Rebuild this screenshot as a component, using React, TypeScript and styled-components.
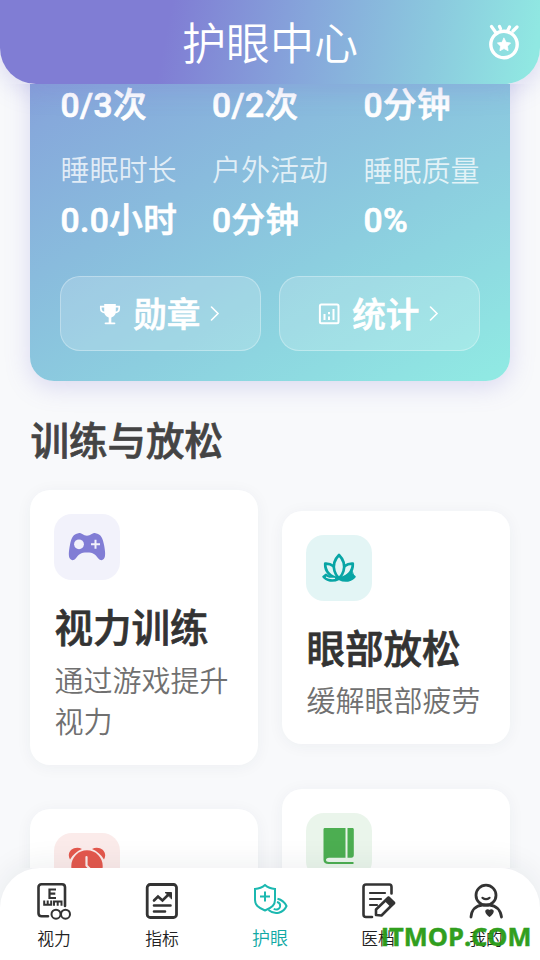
import React from 'react';
import styled, { createGlobalStyle } from 'styled-components';

const GlobalStyle = createGlobalStyle`
  * { box-sizing: border-box; }
  body {
    margin: 0;
    background: #f8f9fb;
    font-family: Roboto, "Noto Sans CJK SC", sans-serif;
  }
`;

const Screen = styled.div`
  position: relative;
  width: 540px;
  height: 960px;
  display: flex;
  flex-direction: column;
  overflow: hidden;
  background: #f8f9fb;
`;

const Header = styled.header`
  position: relative;
  z-index: 2;
  flex: none;
  height: 84px;
  display: grid;
  grid-template-columns: 72px 1fr 72px;
  align-items: center;
  border-radius: 0 0 36px 36px;
  background: linear-gradient(101deg, #807dd4 0%, #807dd4 31%, #86a6db 56%, #8bc9de 79%, #90e8e2 98%);
  box-shadow: 0 6px 24px rgba(128, 125, 212, 0.28);
`;

const Title = styled.h1`
  grid-column: 2;
  margin: 0;
  padding-top: 5px;
  text-align: center;
  font-size: 44px;
  line-height: 64px;
  font-weight: 350;
  color: #fff;
`;

const HeaderAction = styled.button`
  display: flex;
  justify-content: center;
  padding: 0;
  border: 0;
  background: none;
`;

const Content = styled.main`
  flex: 1;
  min-height: 0;
  overflow: hidden;
  padding: 0 30px;
`;

const SummaryCard = styled.section`
  height: 486.5px;
  margin-top: -190px;
  padding: 0 30px 29.5px;
  display: flex;
  flex-direction: column;
  justify-content: flex-end;
  border-radius: 24px;
  background: linear-gradient(150deg, #807dd4 0%, #86a9db 31%, #8ccedf 70%, #90e9e3 98%);
  box-shadow: 0 6px 24px rgba(128, 125, 212, 0.25);
`;

const Stats = styled.div`
  display: grid;
  grid-template-columns: repeat(3, 117px);
  justify-content: space-between;
  row-gap: 19px;
  margin: 0 -0.5px 31px 0.5px;
  white-space: nowrap;
`;

const StatLabel = styled.div<{ $nudge?: boolean }>`
  padding-top: ${p => (p.$nudge ? 1 : 0)}px;
  height: 44px;
  font-size: 29px;
  line-height: 44px;
  font-weight: 350;
  color: rgba(255, 255, 255, 0.77);
`;

const StatValue = styled.div`
  margin-top: 3px;
  height: 49px;
  font-size: 33.6px;
  line-height: 49px;
  font-weight: 500;
  -webkit-text-stroke: 0.7px currentColor;
  color: #fff;
  letter-spacing: 0.4px;
`;

const Actions = styled.div`
  display: grid;
  grid-template-columns: 1fr 1fr;
  gap: 18px;
`;

const ActionButton = styled.button`
  height: 75px;
  padding: 0 2px 0 0;
  display: flex;
  align-items: center;
  justify-content: center;
  border: 1.5px solid rgba(255, 255, 255, 0.3);
  border-radius: 20px;
  background: rgba(255, 255, 255, 0.18);
  font: 500 33.6px/50px Roboto, "Noto Sans CJK SC", sans-serif;
  -webkit-text-stroke: 0.7px currentColor;
  color: #fff;
  & > span { margin: 4px 9.5px 0 12px; }
`;

const SectionTitle = styled.h2`
  margin: 31px 0 18.5px;
  padding-left: 0.5px;
  font-size: 38.5px;
  line-height: 60px;
  font-weight: 500;
  -webkit-text-stroke: 0.7px currentColor;
  color: #444;
`;

const Columns = styled.div`
  display: grid;
  grid-template-columns: repeat(2, minmax(0, 1fr));
  gap: 24px;
  align-items: start;
`;

const Column = styled.div<{ $offset: number }>`
  display: flex;
  flex-direction: column;
  gap: 44.5px;
  padding-top: ${p => p.$offset}px;
`;

const FeatureCard = styled.article`
  padding: 24px 24px 21px;
  border-radius: 20px;
  background: #fff;
  box-shadow: 0 2px 16px rgba(40, 50, 80, 0.05);
`;

const IconTile = styled.div<{ $tint: string }>`
  width: 66px;
  height: 66px;
  display: flex;
  align-items: center;
  justify-content: center;
  border-radius: 18px;
  background: ${p => p.$tint};
`;

const FeatureTitle = styled.h3`
  margin: 20px 0 4.5px;
  padding-left: 0.5px;
  font-size: 38.5px;
  line-height: 57px;
  font-weight: 500;
  -webkit-text-stroke: 0.7px currentColor;
  color: #333;
  white-space: nowrap;
`;

const FeatureText = styled.p`
  margin: 0;
  padding-left: 0.5px;
  width: 182px;
  font-size: 29px;
  line-height: 41px;
  font-weight: 350;
  color: #707070;
`;

const TabBar = styled.nav`
  position: relative;
  z-index: 2;
  flex: none;
  height: 92px;
  display: grid;
  grid-template-columns: repeat(5, 1fr);
  border-radius: 40px 40px 0 0;
  background: #fff;
  box-shadow: 0 -4px 30px rgba(30, 40, 60, 0.07);
`;

const Tab = styled.div<{ $active?: boolean }>`
  display: flex;
  flex-direction: column;
  align-items: center;
  padding-top: 12px;
  font-size: ${p => (p.$active ? 18 : 16.8)}px;
  line-height: 26px;
  font-weight: 350;
  color: ${p => (p.$active ? '#10a9a5' : '#222')};
  & > span { margin-top: 4px; }
`;

const Watermark = styled.div`
  position: absolute;
  z-index: 3;
  right: 8.5px;
  bottom: 6px;
  font: 700 25.4px/36px "Open Sans", sans-serif;
  -webkit-text-stroke: 0.5px currentColor;
  color: #279a13;
  opacity: 0.95;
`;

const MedalIcon = () => (
  <svg width="36" height="40" viewBox="0 0 36 40" fill="none" stroke="#fff" strokeLinecap="round">
    <circle cx="18" cy="22.500" r="13.200" strokeWidth="3.400" />
    <path d="M5.500 4.500l5 7M13.500 4.500l1 2.200M23.500 5l-2 4M31 5l-4 4" strokeWidth="3.200" />
    <path d="M18 16.200l2.100 4.100 4.500.7-3.200 3.200.7 4.500-4.100-2.100-4.100 2.100.7-4.500-3.200-3.200 4.500-.7z" fill="#fff" strokeWidth=".8" />
  </svg>
);

const TrophyIcon = () => (
  <svg width="22" height="22" viewBox="0 0 22 22" fill="none" stroke="#fff">
    <path d="M5.200 1h11.600v7.500c0 3.500-2.500 6-5.800 6s-5.800-2.500-5.800-6z" fill="#fff" stroke="none" />
    <path d="M6 3.700H1.800v1.800C1.800 8 3.500 9.500 6.500 9.700M16 3.700h4.200v1.800c0 2.500-1.700 4-4.700 4.200" strokeWidth="1.700" />
    <path d="M11 13v7" strokeWidth="2.600" />
    <path d="M6.500 20.300h9" strokeWidth="1.800" strokeLinecap="round" />
  </svg>
);

const StatsIcon = () => (
  <svg width="22" height="22" viewBox="0 0 22 22" fill="none" stroke="#fff">
    <rect x="1.900" y="1.500" width="18.600" height="18.800" rx="1.500" strokeWidth="2" />
    <path d="M6.500 11v6M11 13.500V17M15.500 6v11M11 9v2.200" strokeWidth="2" />
  </svg>
);

const ChevronIcon = () => (
  <svg width="10" height="16" viewBox="0 0 10 16" fill="none" stroke="#fff" strokeWidth="1.600" strokeLinecap="round">
    <path d="M1.500 1L8 7.500l-6.500 6.500" />
  </svg>
);

const GamepadIcon = () => (
  <svg width="38" height="30" viewBox="0 0 38 30">
    <path d="M10.500 1.200C13.500.6 15 3.700 19 3.700s5.500-3.100 8.500-2.500c5.500.6 7.500 5.500 8.600 12 1 5.500 1.900 11.300-.4 13.900-1.500 1.800-3.900 1.300-5.600-.9-2.700-3.700-4.800-5.700-11.100-5.700s-8.400 2-11.100 5.700c-1.700 2.200-4.100 2.700-5.600.9C0 24.500.9 18.700 1.900 13.200c1.100-6.500 3.100-11.400 8.600-12z" fill="#817dd5" />
    <circle cx="11" cy="12.300" r="4.900" fill="#f2f2fb" />
    <path d="M27.500 7.800v9M23 12.300h9" stroke="#f2f2fb" strokeWidth="2" />
  </svg>
);

const LotusIcon = () => (
  <svg width="36" height="32" viewBox="0 0 36 32" fill="none" stroke="#08a5a5" strokeWidth="2.700" strokeLinejoin="round" strokeLinecap="round">
    <path d="M18 3C13 8 11.800 13 13.500 19c.8 3 2.500 5.500 4.500 7.500 2-2 3.700-4.500 4.500-7.500C24.200 13 23 8 18 3z" />
    <path d="M12.500 14.200C9.500 12 7 11.500 4.200 11.700c-.3 7.500 5 13.300 13.800 14.800M23.500 14.200c3-2.200 5.500-2.700 8.300-2.500.3 7.500-5 13.300-13.800 14.800" />
    <path d="M5 22.500l-2.800 2.300c3 4.300 10 5.200 15.800 2.200 5.800 3 12.800 2.100 15.800-2.200L31 22.500c-2.500 2.500-7 4-13 4.500-6-.5-10.500-2-13-4.500z" fill="#08a5a5" strokeWidth="2" />
    <path d="M31 19.500l-12.500 8 9-.5 5-2.500z" fill="#08a5a5" strokeWidth="1" />
    <path d="M5.500 25.200c2.500 1.500 5 1.500 8 1.200" stroke="#e3f5f5" strokeWidth="1.300" />
  </svg>
);

const AlarmIcon = () => (
  <svg width="38" height="38" viewBox="0 0 38 38">
    <path d="M2 12.500C-2.500 4.500 6.500-2 14 2 9 4 5 7.500 2 12.500zM36 12.500C40.500 4.500 31.500-2 24 2c5 2 9 5.500 12 10.500z" fill="#e4584d" />
    <circle cx="19" cy="19" r="15.700" fill="#e4584d" />
    <path d="M18.500 10v8.500l5 5" fill="none" stroke="#fbebea" strokeWidth="2.200" strokeLinecap="round" />
  </svg>
);

const BookIcon = () => (
  <svg width="32" height="38" viewBox="0 0 32 38">
    <path d="M2 1h20.500v29.700H6c-2 0-3 1-3 2.200s1 2 3 2h24.500v2.200H5.500C2.500 37.100.5 35.500.5 33V2.500C.5 1.500 1 1 2 1zM24.500 1h4.800c1 0 1.500.5 1.500 1.500V28c0 2-1 2.700-2.500 2.700h-3.800z" fill="#4cae51" />
  </svg>
);

const EyeChartIcon = () => (
  <svg width="40" height="42" viewBox="0 0 40 42" fill="none" stroke="#333" strokeWidth="2.600" strokeLinecap="round">
    <path d="M14 36.300H7.500q-3 0-3-3v-26q0-3 3-3h20.500q3 0 3 3V26" />
    <path d="M22 9.500h-6.500v8.500H22M15.500 13.700h5.800" strokeWidth="2.200" strokeLinecap="butt" />
    <path d="M10.200 20.500v4.300h7V20.500M13.700 20.500v4.300M20 25.700v-4.300h7.500v4.300M23.700 21.500v4.200" strokeWidth="2" strokeLinecap="butt" />
    <g strokeWidth="2"><circle cx="22" cy="34.200" r="4.500" /><circle cx="31.500" cy="34.200" r="4.500" /></g>
  </svg>
);

const IndicatorIcon = () => (
  <svg width="40" height="42" viewBox="0 0 40 42" fill="none" stroke="#333" strokeWidth="2.800" strokeLinecap="round">
    <rect x="5.200" y="4.500" width="29.300" height="33" rx="3" />
    <path d="M12 20.500l4-4 4.500 4 7-7" strokeWidth="2.600" />
    <path d="M23.500 12.500h6v6z" fill="#333" strokeWidth="1" />
    <path d="M12 25.500h16.500M12 31.500h11" strokeWidth="2.600" />
  </svg>
);

const EyeCareIcon = () => (
  <svg width="40" height="42" viewBox="0 0 40 42" fill="none" stroke="#1bb8b0" strokeWidth="2">
    <path d="M15 5c-3 2.700-6 3.700-10 4v11c0 5 3 7.500 10 10.500 7-3 10-5.500 10-10.500V9c-4-.3-7-1.300-10-4z" />
    <path d="M15 11.500v10M10 16.500h10" />
    <path d="M18.500 30C25 35.500 33.500 33 36.500 26c-1.700-3.500-5-6.300-9-7.300" />
    <path d="M27 22c2.300.6 3.500 2.200 3 4.700-.6 2.500-3.200 3.500-6.300 2.200" />
  </svg>
);

const RecordIcon = () => (
  <svg width="40" height="42" viewBox="0 0 40 42" fill="none" stroke="#333" strokeWidth="2.600" strokeLinecap="round" strokeLinejoin="round">
    <path d="M14 37H8q-2.500 0-2.500-2.500V7q0-2.500 2.500-2.500h23.500Q33.500 4.500 33.500 7v6.500" />
    <path d="M12 13h15M12 19h11M12 25h7" strokeWidth="2.200" />
    <path d="M18 35v-5.500L30.500 17.500l5.500 5.500L23.500 35.500z" />
    <path d="M30.500 18l5.500 5-3 2.500-5-5z" fill="#333" />
  </svg>
);

const ProfileIcon = () => (
  <svg width="40" height="42" viewBox="0 0 40 42" fill="none" stroke="#333" strokeWidth="2.800" strokeLinecap="round">
    <circle cx="20" cy="15.200" r="10" />
    <path d="M16.500 17.800q3.500 2.800 7 0" strokeWidth="2.200" />
    <path d="M5 37c.5-7 5-11.500 11.500-12h7C30 25.500 34.500 30 35.500 37" />
    <path d="M23.500 36c-6-4.500-3-7.500 0-5.200 3-2.300 6 .7 0 5.200z" fill="#333" strokeWidth="1.600" />
  </svg>
);

const stats = [
  ['视力训练', '0/3次'], ['眼部放松', '0/2次'], ['用眼时长', '0分钟'],
  ['睡眠时长', '0.0小时'], ['户外活动', '0分钟'], ['睡眠质量', '0%'],
];

const tabs = [
  { label: '视力', Icon: EyeChartIcon },
  { label: '指标', Icon: IndicatorIcon },
  { label: '护眼', Icon: EyeCareIcon, active: true },
  { label: '医档', Icon: RecordIcon },
  { label: '我的', Icon: ProfileIcon },
];

interface FeatureProps {
  tint: string;
  icon: React.ReactNode;
  title: string;
  text: string;
}

const Feature = ({ tint, icon, title, text }: FeatureProps) => (
  <FeatureCard>
    <IconTile $tint={tint}>{icon}</IconTile>
    <FeatureTitle>{title}</FeatureTitle>
    <FeatureText>{text}</FeatureText>
  </FeatureCard>
);

export default function App() {
  return (
    <Screen>
      <GlobalStyle />
      <Header>
        <Title>护眼中心</Title>
        <HeaderAction aria-label="勋章"><MedalIcon /></HeaderAction>
      </Header>
      <Content>
        <SummaryCard>
          <Stats>
            {stats.map(([label, value], i) => (
              <div key={label}>
                <StatLabel $nudge={i % 3 === 2}>{label}</StatLabel>
                <StatValue>{value}</StatValue>
              </div>
            ))}
          </Stats>
          <Actions>
            <ActionButton><TrophyIcon /><span>勋章</span><ChevronIcon /></ActionButton>
            <ActionButton><StatsIcon /><span>统计</span><ChevronIcon /></ActionButton>
          </Actions>
        </SummaryCard>
        <SectionTitle>训练与放松</SectionTitle>
        <Columns>
          <Column $offset={0}>
            <Feature tint="#f2f2fb" icon={<GamepadIcon />} title="视力训练" text="通过游戏提升视力" />
            <Feature tint="#fbebea" icon={<AlarmIcon />} title="用眼提醒" text="定时提醒休息" />
          </Column>
          <Column $offset={20.5}>
            <Feature tint="#e3f5f5" icon={<LotusIcon />} title="眼部放松" text="缓解眼部疲劳" />
            <Feature tint="#eaf5eb" icon={<BookIcon />} title="护眼知识" text="学习护眼知识" />
          </Column>
        </Columns>
      </Content>
      <TabBar>
        {tabs.map(({ label, Icon, active }) => (
          <Tab key={label} $active={active}><Icon /><span>{label}</span></Tab>
        ))}
      </TabBar>
      <Watermark>ITMOP.COM</Watermark>
    </Screen>
  );
}
